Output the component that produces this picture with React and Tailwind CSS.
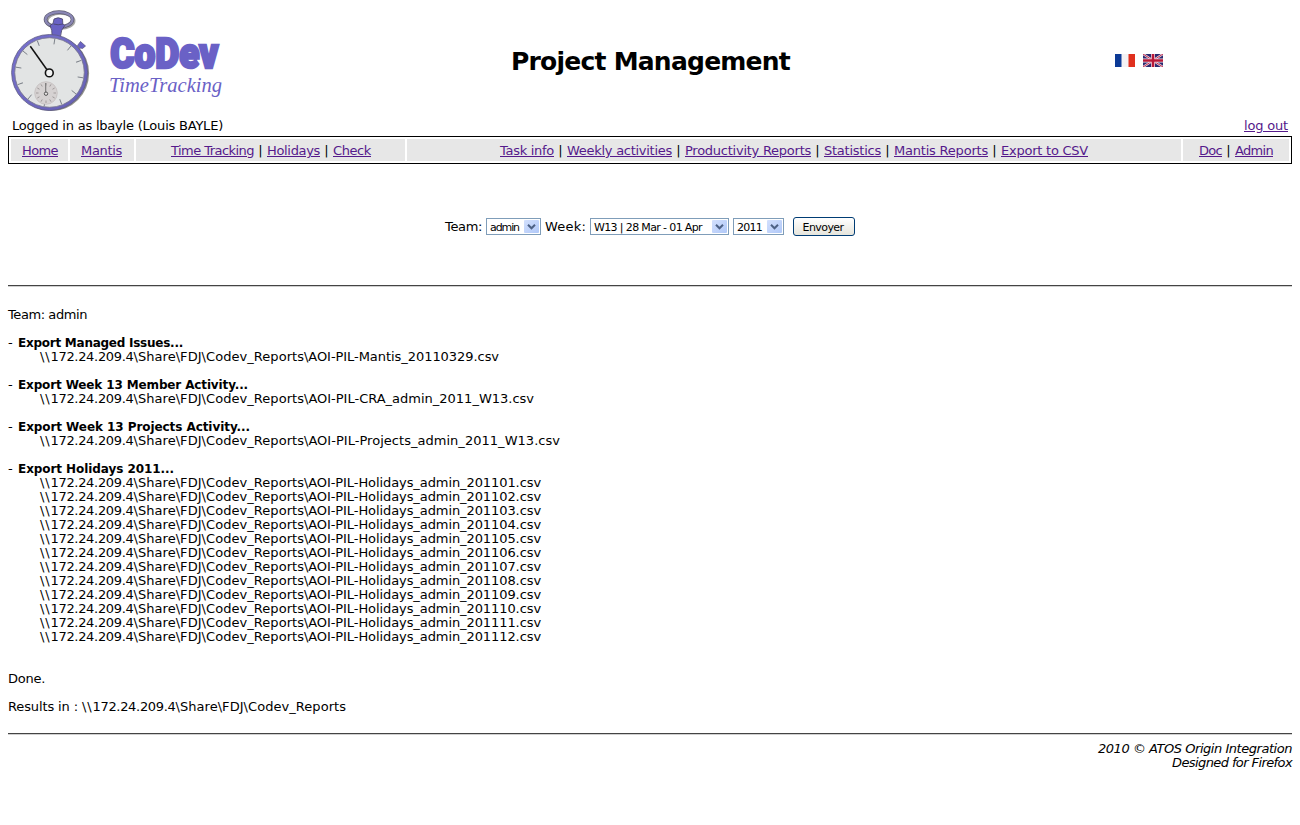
import React, { useLayoutEffect, useRef } from "react";

// Text run whose letter spacing is adjusted so that it spans `w` pixels.
function Fit({ w, className = "", children, as: Tag = "span", ...rest }) {
  const ref = useRef(null);
  useLayoutEffect(() => {
    const el = ref.current;
    el.style.letterSpacing = "0px";
    const range = document.createRange();
    range.selectNodeContents(el);
    const natural = range.getBoundingClientRect().width;
    el.style.letterSpacing = (w - natural) / el.textContent.length + "px";
  }, [w, children]);
  return (
    <Tag ref={ref} className={"inline-block whitespace-pre " + className} style={{ width: w }} {...rest}>
      {children}
    </Tag>
  );
}

function Links({ items }) {
  return items.map(([label, w], i) => (
    <React.Fragment key={label}>
      {i > 0 && <span className="w-[13px] text-center">|</span>}
      <Fit as="a" href="#" w={w} className="text-[#551a8b] underline underline-offset-1">
        {label}
      </Fit>
    </React.Fragment>
  ));
}

function Stopwatch() {
  const ticks = Array.from({ length: 12 }, (_, i) => i * 30 + 9);
  return (
    <svg className="h-[104px] w-[84px] shrink-0" viewBox="8 8 84 104">
      <defs>
        <linearGradient id="rim" x1="0" y1="0" x2="1" y2="1">
          <stop offset="0" stopColor="#7771cf" />
          <stop offset="1" stopColor="#6660b4" />
        </linearGradient>
      </defs>
      <ellipse cx="60.5" cy="20.8" rx="13.500" ry="7.500" fill="none" stroke="#a5a5a5" strokeWidth="3" />
      <ellipse cx="59" cy="19.600" rx="13.500" ry="7.500" fill="none" stroke="#5c5a70" strokeWidth="3.600" />
      <ellipse cx="59" cy="19.600" rx="13.500" ry="7.500" fill="none" stroke="#8a87b5" strokeWidth="2.200" />
      <path d="M54 19q4-2.500 8.500 0l.3 4.500 2 2q-4 4-4.300 11h-8.500q.4-7-2-11l3-2z" fill="#6962c4" stroke="#464365" strokeWidth=".8" />
      <path d="M53.500 24q4.500 1.500 9.500 0" fill="none" stroke="#464365" strokeWidth=".8" />
      <path d="M77.500 45.500l3-4 5 4.500-3 2.500-2-.5-1 1z" fill="#6962c4" stroke="#555078" strokeWidth=".7" />
      <circle cx="51.300" cy="73.300" r="37.800" fill="#8f8f8c" />
      <circle cx="49.600" cy="72.500" r="38" fill="url(#rim)" stroke="#5d5a82" strokeWidth=".8" />
      <circle cx="49.500" cy="72.500" r="34.800" fill="#e2e4e4" stroke="#77758f" strokeWidth=".9" />
      {ticks.map((a) => (
        <path key={a} d="M49.500 38.500v5.500" stroke="#777c85" strokeWidth=".9" transform={`rotate(${a} 49.500 72.500)`} />
      ))}
      <circle cx="46" cy="93" r="11.300" fill="#d6d2d2" stroke="#c1bcbc" strokeWidth=".7" />
      {ticks.map((a) => (
        <path key={a} d="M46 83v2.500" stroke="#8c8888" strokeWidth=".7" transform={`rotate(${a - 9} 46 93)`} />
      ))}
      <path d="M45.700 83v9" stroke="#777" strokeWidth="1.100" />
      <circle cx="46" cy="93.700" r="1.700" fill="#e7e4e4" stroke="#555" strokeWidth="1" />
      <path d="M30.300 46.300L46.800 69.500" stroke="#111" strokeWidth="1.500" />
      <circle cx="49.300" cy="72.900" r="3.900" fill="#f2f3f3" stroke="#111" strokeWidth="1.600" />
    </svg>
  );
}

function Wordmark() {
  return (
    <svg className="ml-4 h-[104px] w-[118px] shrink-0 overflow-visible" viewBox="108 8 118 104">
      <text x="110.300" y="67.600" textLength="108" lengthAdjust="spacingAndGlyphs" fontFamily="Roboto, 'Liberation Sans', sans-serif" fontWeight="900" fontSize="42" fill="#6a61c6" stroke="#6a61c6" strokeWidth="2.600">
        CoDev
      </text>
      <text x="109" y="92" textLength="113" lengthAdjust="spacingAndGlyphs" fontFamily="'Liberation Serif', serif" fontStyle="italic" fontSize="20" fill="#6a61c6">
        TimeTracking
      </text>
    </svg>
  );
}

function FrenchFlag() {
  return (
    <svg className="h-[13px] w-5" viewBox="0 0 20 13">
      <path d="M0 0h20v13H0z" fill="#f4f2f4" />
      <path d="M0 0h6.500v13H0z" fill="#0c3a96" />
      <path d="M13.500 0H20v13h-6.500z" fill="#e0301e" />
    </svg>
  );
}

function BritishFlag() {
  return (
    <svg className="h-[13px] w-5" viewBox="0 0 20 13">
      <path d="M0 0h20v13H0z" fill="#2b2a70" />
      <path d="M0 0l20 13M20 0L0 13" stroke="#eedde6" strokeWidth="2.300" />
      <path d="M0 0l20 13M20 0L0 13" stroke="#c02a4c" strokeWidth="1" />
      <path d="M10 0v13M0 6.500h20" stroke="#f3e4ea" strokeWidth="4" />
      <path d="M10 0v13M0 6.500h20" stroke="#b81838" strokeWidth="2.600" />
    </svg>
  );
}

function Select({ label, textWidth, className }) {
  return (
    <div className={"flex h-[17px] items-center justify-between border border-[#7f9db9] bg-white pl-[3px] pr-px text-[11px] leading-[15px] " + className}>
      <Fit w={textWidth} className="pt-px">{label}</Fit>
      <span className="flex h-[13px] w-[15px] items-center justify-center rounded-[1px] bg-linear-to-br from-[#d3e0fd] to-[#b0c8f8]">
        <svg className="h-[6px] w-[9px]" viewBox="0 0 9 6">
          <path d="M1 .8l3.500 3.500L8 .8" fill="none" stroke="#4d6185" strokeWidth="2" />
        </svg>
      </span>
    </div>
  );
}

const months = ["01", "02", "03", "04", "05", "06", "07", "08", "09", "10", "11", "12"];

const exportsList = [
  { title: "Export Managed Issues...", w: 165, files: [["AOI-PIL-Mantis_20110329.csv", 195]] },
  { title: "Export Week 13 Member Activity...", w: 230, files: [["AOI-PIL-CRA_admin_2011_W13.csv", 230]] },
  { title: "Export Week 13 Projects Activity...", w: 232, files: [["AOI-PIL-Projects_admin_2011_W13.csv", 256]] },
  { title: "Export Holidays 2011...", w: 156, files: months.map((m) => [`AOI-PIL-Holidays_admin_2011${m}.csv`, 237]) },
];

function ShareDir() {
  return (
    <>
      <Fit w={10.5}>{"\\\\"}</Fit>
      <Fit w={83}>172.24.209.4</Fit>
      <Fit w={170.5}>{"\\Share\\FDJ\\Codev_Reports"}</Fit>
    </>
  );
}

function Rule() {
  return <div className="h-[2px] border-b border-[#d0d0d0] bg-[#444]" />;
}

export default function App() {
  return (
    <div className="h-[825px] w-[1300px] overflow-hidden bg-white px-2 pt-2 font-['DejaVu_Sans',sans-serif] text-[13px] leading-[14px] text-black">
      <header className="flex h-[104px]">
        <div className="flex w-[503px]">
          <Stopwatch />
          <Wordmark />
        </div>
        <h1 className="w-[604px] pt-[39px] text-[25px] font-bold leading-[30px]">
          <Fit w={279}>Project Management</Fit>
        </h1>
        <div className="flex gap-2 pt-[46px]">
          <FrenchFlag />
          <BritishFlag />
        </div>
      </header>

      <div className="flex justify-between px-1 pb-[3px] pt-[7px]">
        <Fit w={211}>Logged in as lbayle (Louis BAYLE)</Fit>
        <Fit as="a" href="#" w={44} className="text-[#551a8b] underline underline-offset-1">log out</Fit>
      </div>

      <nav className="flex h-7 w-[1284px] gap-[2px] border border-black p-[2px] leading-[24px] [&>div]:flex [&>div]:h-[22px] [&>div]:bg-[#e7e7e7]">
        <div className="w-[57px] pl-[11px]"><Links items={[["Home", 36]]} /></div>
        <div className="w-[64px] pl-[11px]"><Links items={[["Mantis", 41]]} /></div>
        <div className="w-[269px] pl-[35px]">
          <Links items={[["Time Tracking", 83], ["Holidays", 53], ["Check", 38]]} />
        </div>
        <div className="w-[774px] pl-[93px]">
          <Links
            items={[
              ["Task info", 54],
              ["Weekly activities", 105],
              ["Productivity Reports", 126],
              ["Statistics", 57],
              ["Mantis Reports", 94],
              ["Export to CSV", 87],
            ]}
          />
        </div>
        <div className="w-[106px] pl-4"><Links items={[["Doc", 23], ["Admin", 38]]} /></div>
      </nav>

      <form className="flex h-[121px] items-start pl-[437px] pt-[53px]">
        <Fit w={37} className="mr-1 pt-[3px]">Team:</Fit>
        <Select label="admin" textWidth={29} className="mt-px w-[55px]" />
        <Fit w={41} className="ml-1 mr-1 pt-[3px]">Week:</Fit>
        <Select label="W13 | 28 Mar - 01 Apr" textWidth={108} className="mt-px w-[139px]" />
        <Select label="2011" textWidth={25} className="ml-1 mt-px w-[51px]" />
        <button type="button" className="ml-[9px] h-[19px] w-[62px] rounded-[3px] border border-[#003c74] bg-linear-to-b from-white to-[#e6e5dc] pr-[2px] pt-px text-center text-[11px] leading-[17px]">
          <Fit w={41}>Envoyer</Fit>
        </button>
      </form>

      <Rule />

      <main className="pt-[21px]">
        <p className="h-7"><Fit w={79}>Team: admin</Fit></p>
        {exportsList.map((group) => (
          <section key={group.title} className="pb-[14px]">
            <h2 className="flex h-[14px]">
              <span className="w-[10px]">-</span>
              <Fit w={group.w} className="text-[12px] font-bold">{group.title}</Fit>
            </h2>
            <ul className="pl-8">
              {group.files.map(([file, w]) => (
                <li key={file} className="flex h-[14px]">
                  <ShareDir />
                  <Fit w={w}>{`\\${file}`}</Fit>
                </li>
              ))}
            </ul>
          </section>
        ))}
        <p className="h-7 pt-[14px]"><Fit w={37}>Done.</Fit></p>
        <p className="flex h-[47px] pt-[14px]">
          <Fit w={74}>{"Results in : "}</Fit>
          <ShareDir />
        </p>
      </main>

      <footer>
        <Rule />
        <div className="flex flex-col items-end pt-[7px] italic">
          <Fit w={194}>2010 © ATOS Origin Integration</Fit>
          <Fit w={120}>Designed for Firefox</Fit>
        </div>
      </footer>
    </div>
  );
}
